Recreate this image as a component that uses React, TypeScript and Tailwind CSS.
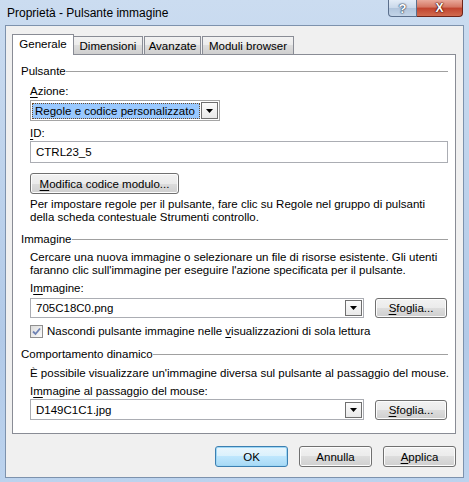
import React from "react";

function U({ children }: { children: React.ReactNode }) {
  return <span className="underline decoration-1 underline-offset-[2px]">{children}</span>;
}

function ArrowBox({ className }: { className: string }) {
  return (
    <div className={"flex items-center justify-center border border-[#6f6f6f] bg-[linear-gradient(#fbfbfb,#e9e9e9)] " + className}>
      <svg width="7" height="4" viewBox="0 0 7 4">
        <path d="M0 0H7L3.5 4Z" fill="#000" />
      </svg>
    </div>
  );
}

function WinButton({ children, className }: { children: React.ReactNode; className: string }) {
  return (
    <div
      className={
        "flex items-center justify-center rounded-[3px] border border-[#707070] bg-[linear-gradient(#f2f2f2,#ebebeb_50%,#dddddd_50%,#cfcfcf)] shadow-[inset_0_0_0_1px_#fcfcfc] leading-[14px] whitespace-nowrap " +
        className
      }
    >
      {children}
    </div>
  );
}

function Section({ title, className }: { title: string; className: string }) {
  return (
    <div className={"flex items-center h-[14px] leading-[14px] whitespace-nowrap " + className}>
      <span>{title}</span>
      <div className="flex-1 h-px bg-[#a0a0a0]" />
    </div>
  );
}

function Combo({ value, className }: { value: string; className: string }) {
  return (
    <div className={"flex items-center border border-[#abadb3] bg-white pl-[5px] pr-[1px] " + className}>
      <span className="flex-1 leading-[14px] whitespace-nowrap">{value}</span>
      <ArrowBox className="w-[17px] h-[16px]" />
    </div>
  );
}

export default function App() {
  return (
    <div className="w-[469px] h-[482px] overflow-hidden flex flex-col bg-[linear-gradient(180deg,#cbdcf0_0%,#bed3ec_35%,#b2cae8_70%,#bcd3ee_100%)] font-['Liberation_Sans','Segoe_UI',Arial,sans-serif] text-[11.5px] text-black">
      {/* Title bar */}
      <div className="h-[25px] shrink-0 flex items-start">
        <div className="pl-[7px] pt-[5px] leading-[16px] text-[12px] whitespace-nowrap">Proprietà - Pulsante immagine</div>
        <div className="ml-auto mr-[6px] flex">
          <div className="w-[29px] h-[17px] flex items-center justify-center rounded-bl-[4px] border border-t-0 border-[#5b6f8c] bg-[linear-gradient(#e3ecf7,#c9d8ea_50%,#b0c4dc_50%,#c3d4e8)]">
            <span className="text-white font-bold text-[13px] leading-[13px] [text-shadow:0_0_1px_#2d3e57,0_0_1px_#2d3e57,0_0_2px_#2d3e57]">?</span>
          </div>
          <div className="w-[46px] h-[17px] flex items-center justify-center rounded-br-[4px] border border-t-0 border-l-0 border-[#6e2419] bg-[linear-gradient(#e9a99b,#d47562_45%,#c0432e_50%,#d16b4f)]">
            <span className="text-white font-bold text-[12px] leading-[12px] [text-shadow:0_0_1px_#4a1209,0_0_1px_#4a1209,0_0_2px_#4a1209]">X</span>
          </div>
        </div>
      </div>

      {/* Client area */}
      <div className="ml-[5px] mr-[5px] h-[453px] shrink-0 border border-[#7d92ad] bg-[#f0f0f0] pl-[6px] pr-[7px] pt-[8px] flex flex-col">
        {/* Tabs */}
        <div className="flex items-end h-[20px] shrink-0 whitespace-nowrap">
          <div className="relative z-10 w-[62px] h-[21px] -mb-px border border-b-0 border-[#898c95] bg-white flex items-start justify-center pt-[2px] leading-[14px]">
            Generale
          </div>
          <div className="w-[69px] h-[18px] border border-b-0 border-l-0 border-[#898c95] bg-[linear-gradient(#f2f2f2,#ebebeb_50%,#dddddd_50%,#cfcfcf)] flex items-center justify-center leading-[14px]">
            Dimensioni
          </div>
          <div className="ml-px w-[57px] h-[18px] border border-b-0 border-[#898c95] bg-[linear-gradient(#f2f2f2,#ebebeb_50%,#dddddd_50%,#cfcfcf)] flex items-center justify-center leading-[14px]">
            Avanzate
          </div>
          <div className="ml-px w-[92px] h-[18px] border border-b-0 border-[#898c95] bg-[linear-gradient(#f2f2f2,#ebebeb_50%,#dddddd_50%,#cfcfcf)] flex items-center justify-center leading-[14px]">
            Moduli browser
          </div>
        </div>

        {/* Panel */}
        <div className="h-[380px] shrink-0 border border-[#898c95] bg-white pl-[8px] pr-[7px] pt-[9px] flex flex-col">
          <Section title="Pulsante" className="" />
          <div className="pl-[9px] flex flex-col">
            <div className="mt-[6px] leading-[14px]">
              <U>A</U>zione:
            </div>
            <div className="mt-[2px] w-[190px] h-[21px] border border-[#a5a5a5] bg-white flex items-center pl-px pr-px">
              <div className="flex-1 h-[16px] mr-[1px] bg-[#99c9ff] border border-dotted border-[#6b4a2a] flex items-center pl-[2px] leading-[14px] whitespace-nowrap overflow-hidden">
                Regole e codice personalizzato
              </div>
              <ArrowBox className="w-[17px] h-[17px]" />
            </div>
            <div className="mt-[5px] leading-[14px]">
              <U>I</U>D:
            </div>
            <div className="mt-[1px] h-[22px] border border-[#abadb3] bg-white flex items-center pl-[5px] leading-[14px]">
              CTRL23_5
            </div>
            <WinButton className="mt-[10px] w-[149px] h-[21px]">
              <span>
                <U>M</U>odifica codice modulo...
              </span>
            </WinButton>
            <p className="mt-[4px] leading-[13px] whitespace-nowrap">
              Per impostare regole per il pulsante, fare clic su Regole nel gruppo di pulsanti
              <br />
              della scheda contestuale Strumenti controllo.
            </p>
          </div>

          <Section title="Immagine" className="mt-[8px]" />
          <div className="pl-[9px] flex flex-col">
            <p className="mt-[5px] leading-[13px] whitespace-nowrap">
              Cercare una nuova immagine o selezionare un file di risorse esistente. Gli utenti
              <br />
              faranno clic sull'immagine per eseguire l'azione specificata per il pulsante.
            </p>
            <div className="mt-[4px] leading-[14px]">
              I<U>m</U>magine:
            </div>
            <div className="mt-[3px] flex items-start gap-[11px]">
              <Combo value="705C18C0.png" className="w-[334px] h-[20px]" />
              <WinButton className="w-[72px] h-[20px]">
                <span>
                  <U>S</U>foglia...
                </span>
              </WinButton>
            </div>
            <div className="mt-[6px] h-[14px] flex items-center gap-[4px] leading-[14px] whitespace-nowrap">
              <div className="w-[13px] h-[13px] border border-[#8f8f8f] bg-[linear-gradient(135deg,#dcdcdc,#fbfbfb)] flex items-center justify-center">
                <svg width="9" height="9" viewBox="0 0 9 9">
                  <path d="M1 4.5L3.5 7L8 1.5" stroke="#6e82b4" strokeWidth="1.8" fill="none" />
                </svg>
              </div>
              <span>
                Nascondi pulsante immagine nelle <U>v</U>isualizzazioni di sola lettura
              </span>
            </div>
          </div>

          <Section title="Comportamento dinamico" className="mt-[9px]" />
          <div className="pl-[9px] flex flex-col">
            <p className="mt-[5px] leading-[14px] whitespace-nowrap">
              È possibile visualizzare un'immagine diversa sul pulsante al passaggio del mouse.
            </p>
            <div className="mt-[4px] leading-[14px]">
              I<U>m</U>magine al passaggio del mouse:
            </div>
            <div className="mt-[1px] flex items-start gap-[11px]">
              <Combo value="D149C1C1.jpg" className="w-[334px] h-[21px]" />
              <WinButton className="mt-[1px] w-[72px] h-[20px]">
                <span>
                  <U>S</U>foglia...
                </span>
              </WinButton>
            </div>
          </div>
        </div>

        {/* Bottom buttons */}
        <div className="mt-[12px] flex justify-end gap-[11px]">
          <div className="w-[73px] h-[21px] flex items-center justify-center rounded-[3px] border border-[#3c7fb1] bg-[linear-gradient(#eaf6fd,#d9f0fc_50%,#bee6fd_50%,#a7d9f5)] shadow-[inset_0_0_0_1px_#9fd7f5] leading-[14px]">
            OK
          </div>
          <WinButton className="w-[73px] h-[21px]">Annulla</WinButton>
          <WinButton className="w-[73px] h-[21px]">
            <span>
              <U>A</U>pplica
            </span>
          </WinButton>
        </div>
      </div>
    </div>
  );
}
